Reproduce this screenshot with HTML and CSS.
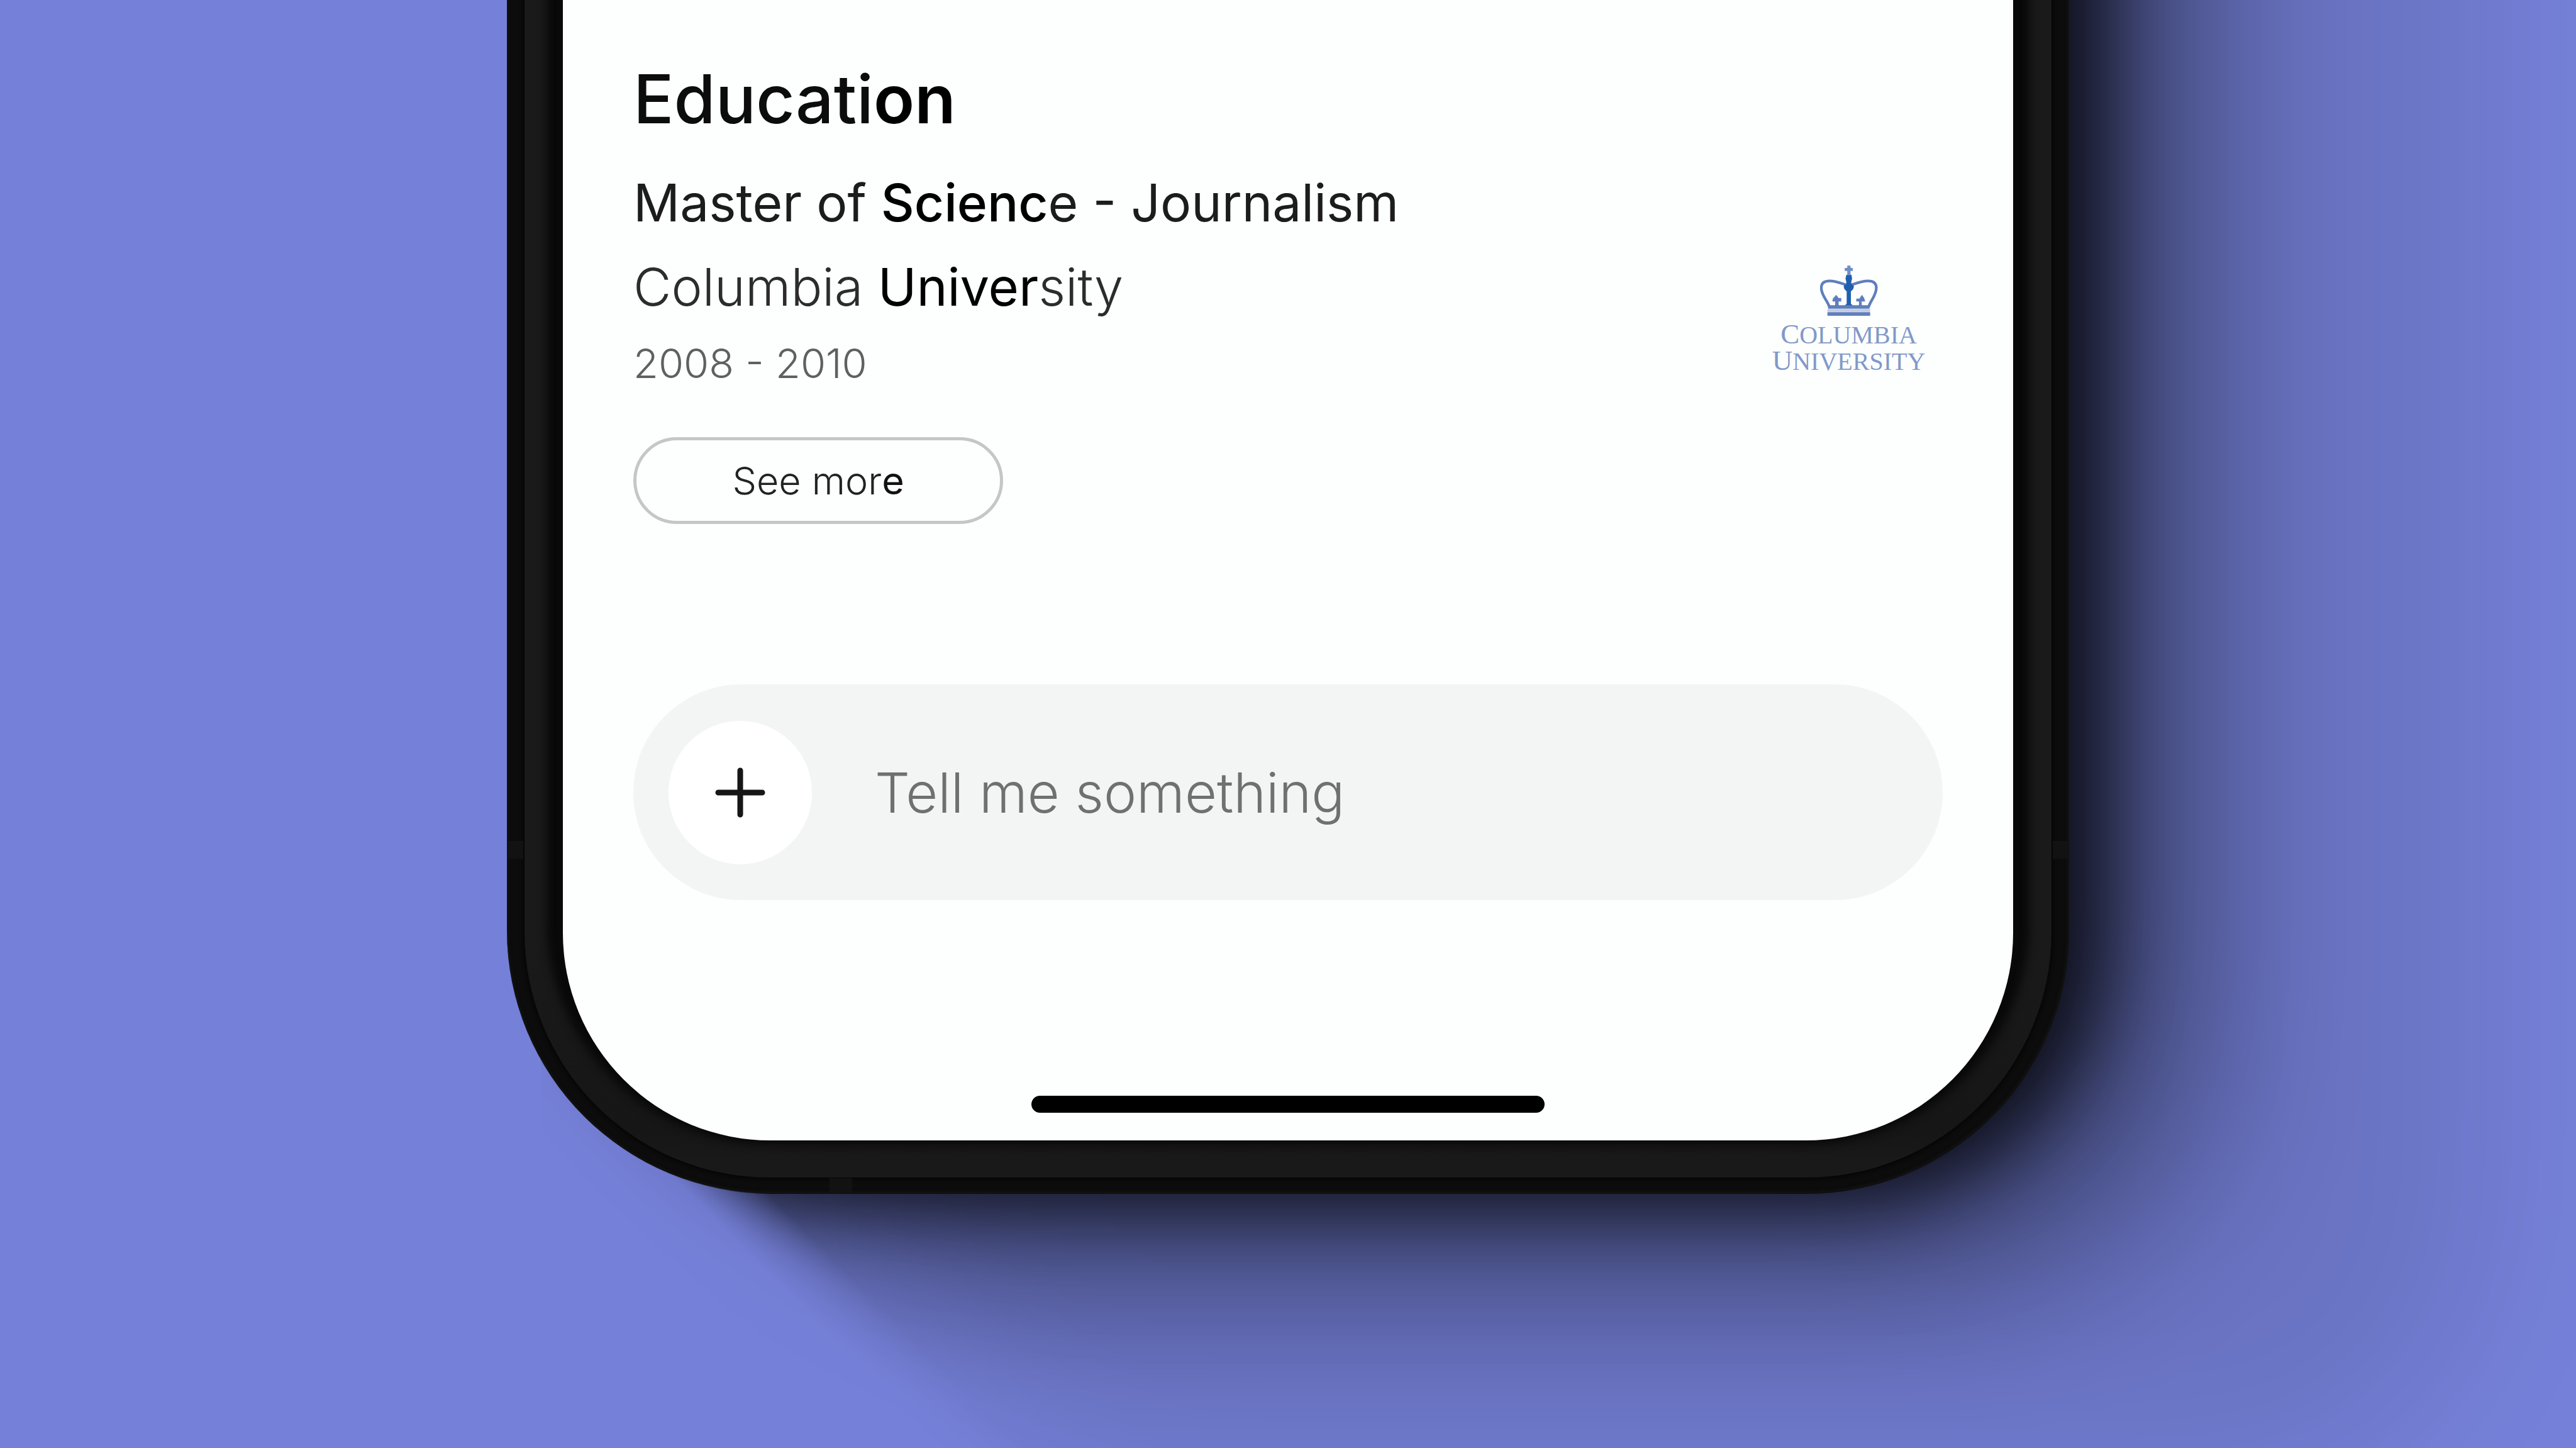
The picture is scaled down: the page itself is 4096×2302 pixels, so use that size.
FILE: index.html
```html
<!DOCTYPE html>
<html lang="en">
<head>
    <meta charset="UTF-8">
    <meta name="viewport" content="width=device-width, initial-scale=1.0">
    <title>Education</title>
    <link rel="stylesheet" href="styles.css">
</head>
<body>

    <div class="shade"><div class="cast"></div></div>

    <div class="phone">
        <div class="band band-left"></div>
        <div class="band band-right"></div>
        <div class="band band-bottom"></div>

        <div class="bezel">
            <main class="screen">
                <section class="education">
                    <h1>Educati<b>on</b></h1>
                    <div class="entry">
                        <div class="entry-text">
                            <h2>Master of <b>Scienc</b>e - Journalism</h2>
                            <p class="school">Columbia <b>Univer</b>sity</p>
                            <p class="years">2008 - 2010</p>
                        </div>
                        <div class="logo">
                            <svg class="crown" viewBox="380 88 300 268" aria-hidden="true">
                                <g fill="none" stroke="#5f7fbc" stroke-width="14">
                                    <path d="M428 306 C416 270 386 246 386 208 C386 182 404 172 430 172 C460 172 490 184 529 196"/>
                                    <path d="M632 306 C644 270 672 246 672 208 C672 182 654 172 628 172 C598 172 568 184 529 196"/>
                                </g>
                                <path fill="#1f5fae" d="M516 140 H543 L546 160 L542 176 V188 L556 198 L552 214 L540 226 V290 L556 306 H502 L518 290 V226 L506 214 L502 198 L516 188 V176 L512 160 Z"/>
                                <path fill="#6f8ec6" d="M521 92 H538 V104 H550 V120 H538 V142 H521 V120 H508 V104 H521 Z"/>
                                <path fill="#5f7fbc" d="M464 244 L476 260 H490 V278 H476 V296 L484 306 H455 L458 296 V278 H444 L446 264 Z"/>
                                <path fill="#5f7fbc" d="M597 244 L609 260 L614 278 H596 V296 L604 306 H570 L582 296 V278 H568 V264 H584 Z"/>
                                <path fill="#5f7fbc" d="M420 298 H640 L636 316 H422 Z M418 334 H640 V353 H418 Z"/>
                                <path fill="#c3cbe2" d="M418 318 H640 V332 H418 Z"/>
                            </svg>
                            <div class="logo-name"><span>C</span>OLUMBIA<br><span>U</span>NIVERSITY</div>
                        </div>
                    </div>
                    <button type="button" class="see-more">See mor<b>e</b></button>
                </section>

                <form class="composer">
                    <button type="button" class="add" aria-label="Add">
                        <svg viewBox="0 0 80 80" aria-hidden="true">
                            <path d="M40 5 V75 M5 40 H75" stroke="#161616" stroke-width="9" stroke-linecap="round"/>
                        </svg>
                    </button>
                    <input type="text" placeholder="Tell me something" aria-label="Message">
                </form>

                <div class="home-bar"></div>
            </main>
        </div>
    </div>

</body>
</html>
```

FILE: styles.css
```css
* { box-sizing: border-box; }
body { position: relative; margin: 0; height: 100vh; overflow: hidden; background-color: #7580d8; font-family: Inter, "Liberation Sans", sans-serif; color: #1c1c1c; }
h1, h2, p { margin: 0; }

/* Cast shadow, cut off along a diagonal at the lower left */
.shade {
    position: absolute;
    inset: 0;
    overflow: hidden;
    clip-path: inset(0 0 0 21%);
    mask-image: linear-gradient(45deg, transparent 940px, rgba(0, 0, 0, 0.1) 1060px, #000 1150px);
}
.cast {
    position: absolute;
    top: -1200px;
    bottom: 404px;
    left: 19.68%;
    width: 60.65%;
    border-radius: 0 0 418px 418px;
    background-color: #0c0c0c;
    box-shadow:
        50px 14px 120px rgba(0, 0, 0, 0.75),
        130px 70px 300px rgba(0, 0, 0, 0.45),
        270px 180px 500px rgba(0, 0, 0, 0.18),
        640px 440px 560px rgba(0, 0, 0, 0.1);
}

/* The top of the phone runs past the window */
.phone {
    position: relative;
    width: 60.65%;
    margin: -1200px auto 0 19.68%;
    padding: 0 28px 25px;
    background-color: #0c0c0c;
    border-radius: 0 0 418px 418px;
    box-shadow: inset 0 0 6px #1c1c1c;
}
.bezel {
    padding: 0 61px 59px;
    background: linear-gradient(to top, #191919, #191919 24px, #161616 70px, #1a1a1a 400px);
    border-radius: 0 0 390px 390px;
    box-shadow: 0 0 6px 2px #040404;
}
.screen {
    padding: 1287px 112px 44px;
    background-color: #fdfefe;
    border-radius: 0 0 330px 330px;
    box-shadow: 0 -20px 14px 26px #090909;
}

/* Antenna bands */
.band { position: absolute; background-color: #121212; }
.band-left, .band-right { bottom: 532px; width: 26px; height: 28px; }
.band-left { left: 0; }
.band-right { right: 0; }
.band-bottom { bottom: 0; left: 513px; width: 36px; height: 24px; }

h1 { font-size: 107px; line-height: 140px; font-weight: 500; color: #0c0c0c; }
h1 b { font-weight: 600; color: #000; }
.entry { display: flex; justify-content: space-between; margin-top: 36px; }
h2 { font-size: 82px; line-height: 120px; font-weight: 400; }
h2 b { font-weight: 500; color: #000; }
.school { margin-top: 13px; font-size: 83px; line-height: 120px; font-weight: 300; color: #2c2c2c; }
.school b { font-weight: 400; color: #000; }
.years { margin-top: 18px; font-size: 65px; line-height: 88px; font-weight: 300; color: #606060; }

.logo { margin: 158px 28px 0 0; color: #8199c8; font-family: "Liberation Serif", serif; text-align: center; }
.crown { display: block; width: 92px; height: 82px; margin: 0 auto 8px; }
.logo-name { font-size: 40px; line-height: 41px; }
.logo-name span { font-size: 45px; }

.see-more { width: 588px; height: 138px; margin-top: 73px; border: 5px solid #c6c6c6; border-radius: 69px; background: none; font-family: inherit; font-size: 61px; font-weight: 300; color: #222; }
.see-more b { font-weight: 400; color: #111; }

.composer { display: flex; align-items: center; margin-top: 255px; height: 343px; padding: 0 56px; border-radius: 172px; background-color: #f3f5f4; }
.add { display: flex; align-items: center; justify-content: center; flex: none; width: 228px; height: 228px; padding: 0; border: none; border-radius: 50%; background-color: #fff; }
.add svg { width: 80px; height: 80px; }
.composer input { flex: 1; min-width: 0; margin-left: 100px; padding: 0; border: none; outline: none; background: none; font-family: inherit; font-size: 88px; font-weight: 300; color: #222; }
.composer input::placeholder { color: #707070; opacity: 1; }

.home-bar { width: 816px; height: 27px; margin: 311px auto 0; border-radius: 14px; background-color: #000; }
```
